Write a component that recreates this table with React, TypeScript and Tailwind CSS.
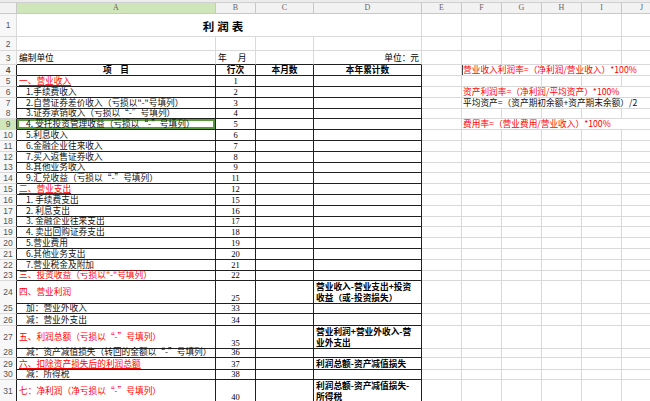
import type { ReactNode } from "react";

const GRID = "grid grid-cols-[17px_199px_40px_58px_108px_40px_40px_40px_40px_40px_40px]";
const LINE = "border-[#d9d9d9]";
const INK = "border-[#202020]";

type Row = {
    n: number;
    h: string;
    a?: ReactNode;
    red?: boolean;
    sub?: boolean;
    ul?: boolean;
    b?: string;
    d?: ReactNode;
    f?: string;
    fRed?: boolean;
};

const rows: Row[] = [
    { n: 5, h: "h-[10.8px]", a: "一、营业收入", red: true, ul: true, b: "1" },
    { n: 6, h: "h-[10.8px]", a: "1.手续费收入", sub: true, b: "2", f: "资产利润率=（净利润/平均资产）*100%", fRed: true },
    { n: 7, h: "h-[10.8px]", a: '2.自营证券差价收入（亏损以"-"号填列）', sub: true, b: "3", f: "平均资产=（资产期初余额+资产期末余额）/2" },
    { n: 8, h: "h-[10.8px]", a: "3.证券承销收入（亏损以“-”号填列）", sub: true, b: "4" },
    { n: 9, h: "h-[10.8px]", a: "4. 受托投资管理收益（亏损以“-”号填列）", sub: true, b: "5", f: "费用率=（营业费用/营业收入）*100%", fRed: true },
    { n: 10, h: "h-[10.8px]", a: "5.利息收入", sub: true, b: "6" },
    { n: 11, h: "h-[10.8px]", a: "6.金融企业往来收入", sub: true, b: "7" },
    { n: 12, h: "h-[10.8px]", a: "7.买入返售证券收入", sub: true, b: "8" },
    { n: 13, h: "h-[10.8px]", a: "8.其他业务收入", sub: true, b: "9" },
    { n: 14, h: "h-[10.8px]", a: "9.汇兑收益（亏损以“-”号填列）", sub: true, b: "11" },
    { n: 15, h: "h-[10.8px]", a: "二、营业支出", red: true, ul: true, b: "12" },
    { n: 16, h: "h-[10.8px]", a: "1. 手续费支出", sub: true, b: "15" },
    { n: 17, h: "h-[10.8px]", a: "2. 利息支出", sub: true, b: "16" },
    { n: 18, h: "h-[10.8px]", a: "3. 金融企业往来支出", sub: true, b: "17" },
    { n: 19, h: "h-[10.8px]", a: "4. 卖出回购证券支出", sub: true, b: "18" },
    { n: 20, h: "h-[10.8px]", a: "5.营业费用", sub: true, b: "19" },
    { n: 21, h: "h-[10.8px]", a: "6.其他业务支出", sub: true, b: "20" },
    { n: 22, h: "h-[10.8px]", a: "7.营业税金及附加", sub: true, b: "21" },
    { n: 23, h: "h-[10.8px]", a: '三、投资收益（亏损以"-"号填列）', red: true, b: "22" },
    {
        n: 24, h: "h-[22px]", a: "四、营业利润", red: true, b: "25",
        d: <>营业收入-营业支出+投资<br />收益（或-投资损失）</>,
    },
    { n: 25, h: "h-[11px]", a: "加：营业外收入", sub: true, b: "33" },
    { n: 26, h: "h-[12px]", a: "减：营业外支出", sub: true, b: "34" },
    {
        n: 27, h: "h-[21px]", a: "五、利润总额（亏损以“-”号填列）", red: true, b: "35",
        d: <>营业利润+营业外收入-营<br />业外支出</>,
    },
    { n: 28, h: "h-[11px]", a: "减：资产减值损失（转回的金额以“-”号填列）", sub: true, b: "36" },
    { n: 29, h: "h-[11px]", a: "六、扣除资产损失后的利润总额", red: true, ul: true, b: "37", d: "利润总额-资产减值损失" },
    { n: 30, h: "h-[11px]", a: "减：所得税", sub: true, b: "38" },
    {
        n: 31, h: "h-[23px]", a: "七：净利润（净亏损以“-”号填列）", red: true, b: "40",
        d: <>利润总额-资产减值损失-<br />所得税</>,
    },
];

function RowNum({ n, dark }: { n: number; dark?: boolean }) {
    return (
        <div
            className={`flex items-center justify-center border-b border-r border-b-[#d9d9d9] font-['Liberation_Sans',sans-serif] text-[8.5px] text-[#555] ${
                dark ? "border-r-[#202020]" : "border-r-[#d9d9d9]"
            } ${n === 9 ? "bg-[#cfe6bb]" : "bg-[#f7f7f7]"}`}
        >
            {n}
        </div>
    );
}

function Blank({ count }: { count: number }) {
    return (
        <>
            {Array.from({ length: count }).map((_, i) => (
                <div key={i} className={`border-b border-r ${LINE}`} />
            ))}
        </>
    );
}

function Note({ text, red }: { text?: string; red?: boolean }) {
    if (!text) return <Blank count={6} />;
    return (
        <>
            <div className={`border-b border-r ${LINE}`} />
            <div
                className={`col-span-5 flex items-center whitespace-nowrap border-b pl-[1px] ${LINE} ${
                    red ? "text-[#f00]" : "text-[#111]"
                }`}
            >
                {text}
            </div>
        </>
    );
}

export default function App() {
    const letters = ["A", "B", "C", "D", "E", "F", "G", "H", "I", "J"];
    return (
        <div className="h-[401px] w-[650px] overflow-hidden bg-white font-['Noto_Sans_CJK_SC','Noto_Sans',sans-serif] text-[8.7px] leading-[10px] text-black">
            {/* toolbar edge */}
            <div className="h-[3px] border-b border-[#cfcfcf] bg-[#ececec]" />

            {/* column letters */}
            <div className={`${GRID} h-[11px]`}>
                <div className="border-b border-r border-[#c8c8c8] bg-[#f2f2f2]" />
                {letters.map((l) => (
                    <div
                        key={l}
                        className={`flex items-center justify-center border-b border-r border-[#c8c8c8] font-['Liberation_Serif',serif] text-[8px] text-[#666] ${
                            l === "A" ? "bg-[#cfe6bb]" : "bg-[#f2f2f2]"
                        }`}
                    >
                        {l}
                    </div>
                ))}
            </div>

            {/* row 1: title */}
            <div className={`${GRID} h-[23px]`}>
                <RowNum n={1} />
                <div className={`col-span-4 flex items-end justify-center border-b border-r pb-[3px] pl-[11px] text-[11.5px] font-bold leading-[14px] tracking-[3px] ${LINE}`}>
                    利润表
                </div>
                <Blank count={6} />
            </div>

            {/* row 2 */}
            <div className={`${GRID} h-[14px]`}>
                <RowNum n={2} />
                <Blank count={10} />
            </div>

            {/* row 3 */}
            <div className={`${GRID} h-[14px]`}>
                <RowNum n={3} />
                <div className="flex items-end border-b border-r border-r-[#d9d9d9] border-b-[#202020] pb-[1px] pl-[2px]">编制单位</div>
                <div className="flex items-end whitespace-nowrap border-b border-r border-r-[#d9d9d9] border-b-[#202020] pb-[1px] pl-[2px]">
                    年<span className="ml-[11px]">月</span>
                </div>
                <div className="border-b border-r border-r-[#d9d9d9] border-b-[#202020]" />
                <div className="flex items-end justify-end border-b border-r border-r-[#d9d9d9] border-b-[#202020] pb-[1px] pr-[2px]">
                    单位：元
                </div>
                <Blank count={6} />
            </div>

            {/* row 4: table head */}
            <div className={`${GRID} h-[11px] font-bold`}>
                <RowNum n={4} dark />
                <div className={`flex items-center justify-center border-b border-r ${INK}`}>项　目</div>
                <div className={`flex items-center justify-center border-b border-r ${INK}`}>行次</div>
                <div className={`flex items-center justify-center border-b border-r ${INK}`}>本月数</div>
                <div className={`flex items-center justify-center border-b border-r ${INK}`}>本年累计数</div>
                <div className={`border-b border-r ${LINE}`} />
                <div className={`col-span-5 flex items-center whitespace-nowrap border-b pl-[1px] font-normal text-[#f00] shadow-[inset_1px_0_0_#444] ${LINE}`}>
                    营业收入利润率=（净利润/营业收入）*100%
                </div>
            </div>

            {rows.map((r) => (
                <div key={r.n} className={`${GRID} ${r.h}`}>
                    <RowNum n={r.n} dark />
                    <div
                        className={`flex items-center whitespace-nowrap border-b border-r ${INK} ${
                            r.sub ? "pl-[9px]" : "pl-[2px]"
                        } ${r.red ? "text-[#f00]" : "text-[#111]"} ${
                            r.n === 9 ? "shadow-[inset_0_0_0_2px_#5a9a3a]" : ""
                        }`}
                    >
                        <span className={r.ul ? "underline decoration-[#f00] underline-offset-[1px]" : ""}>{r.a}</span>
                    </div>
                    <div
                        className={`flex items-end justify-center border-b border-r font-['Liberation_Serif',serif] text-[8.5px] ${INK}`}
                    >
                        {r.b}
                    </div>
                    <div className={`border-b border-r ${INK}`} />
                    <div className={`flex items-center whitespace-nowrap border-b border-r pl-[2px] font-bold leading-[11px] ${INK}`}>
                        <div>{r.d}</div>
                    </div>
                    <Note text={r.f} red={r.fRed} />
                </div>
            ))}
        </div>
    );
}
